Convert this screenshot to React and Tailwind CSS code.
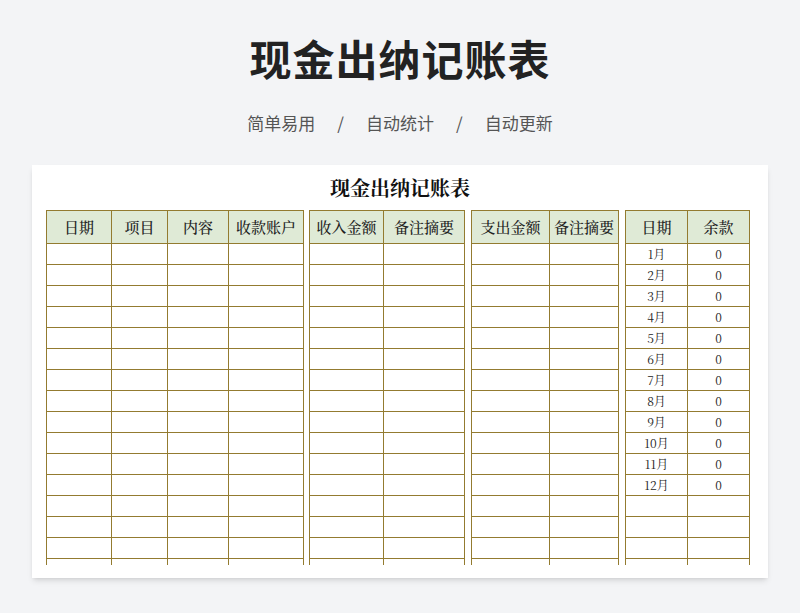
const serif = { fontFamily: '"Noto Serif CJK SC", "Liberation Serif", "Noto Sans CJK SC", serif' };

function Sheet({ cols, widths, rows }) {
  return (
    <table className="border-collapse table-fixed text-[14px] text-[#222]" style={{ width: widths.reduce((a, b) => a + b, 0) }}>
      <colgroup>
        {widths.map((w, i) => (
          <col key={i} style={{ width: w }} />
        ))}
      </colgroup>
      <thead>
        <tr className="h-[33px] bg-[#dfead6]">
          {cols.map((c) => (
            <th key={c} className="border-[1.5px] border-[#937b30] font-medium text-[15px]">{c}</th>
          ))}
        </tr>
      </thead>
      <tbody>
        {Array.from({ length: 16 }).map((_, r) => (
          <tr key={r} className="h-[21px]">
            {cols.map((c, i) => (
              <td key={i} className="border-[1.5px] border-[#937b30] text-center text-[12px] leading-none p-0">
                {rows && rows[r] ? rows[r][i] : ""}
              </td>
            ))}
          </tr>
        ))}
      </tbody>
    </table>
  );
}

export default function App() {
  const months = Array.from({ length: 12 }, (_, i) => [`${i + 1}月`, "0"]);
  return (
    <div className="w-[800px] h-[613px] bg-[#f3f4f6] flex flex-col items-center" style={{ fontFamily: '"Noto Sans CJK SC", sans-serif' }}>
      <h1 className="mt-[32px] text-[42px] font-bold text-[#222] leading-[52px] tracking-[1px]">现金出纳记账表</h1>
      <div className="mt-[27px] flex gap-[22px] text-[17px] text-[#555] leading-6">
        <span>简单易用</span><span>/</span><span>自动统计</span><span>/</span><span>自动更新</span>
      </div>
      <div className="mt-[30px] w-[736px] h-[413px] bg-white shadow-md flex flex-col">
        <div className="text-center text-[20px] font-bold text-[#111] mt-[10px] leading-[26px]" style={serif}>现金出纳记账表</div>
        <div className="mt-[9px] ml-[14px] h-[355px] overflow-hidden flex items-start" style={serif}>
          <Sheet cols={["日期", "项目", "内容", "收款账户"]} widths={[65, 56, 61, 75]} />
          <div className="w-[5px]" />
          <Sheet cols={["收入金额", "备注摘要"]} widths={[74, 81]} />
          <div className="w-[6px]" />
          <Sheet cols={["支出金额", "备注摘要"]} widths={[78, 69]} />
          <div className="w-[6px]" />
          <Sheet cols={["日期", "余款"]} widths={[62, 62]} rows={months} />
        </div>
      </div>
    </div>
  );
}
